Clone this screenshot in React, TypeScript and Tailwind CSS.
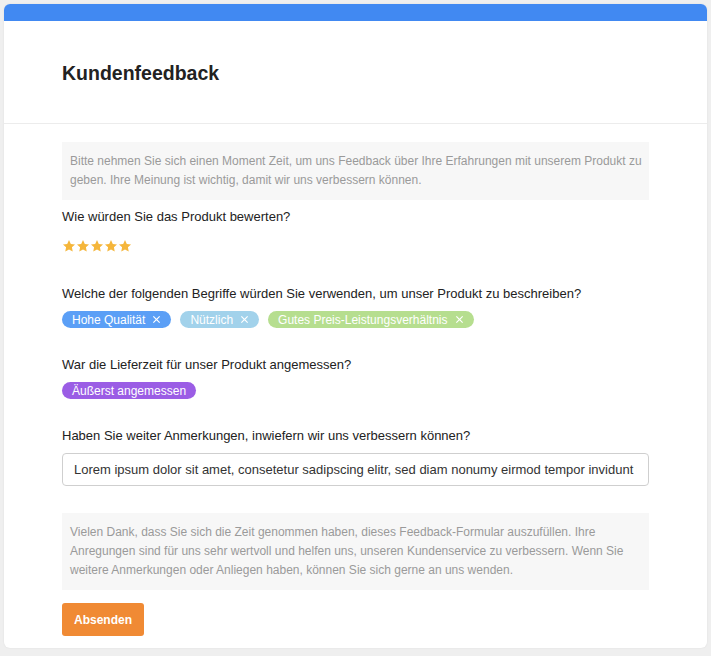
const tags = [
  { label: "Hohe Qualität", bg: "bg-[#5b9ff6]" },
  { label: "Nützlich", bg: "bg-[#a2d2eb]" },
  { label: "Gutes Preis-Leistungsverhältnis", bg: "bg-[#b6de8f]" },
];

function Star() {
  return (
    <svg width="14" height="14" viewBox="0 0 24 24" className="fill-[#f5b63b]">
      <path d="M12 1.8l3.1 6.6 7.2.9-5.3 5 1.4 7.1L12 17.9l-6.4 3.5 1.4-7.1-5.3-5 7.2-.9z" />
    </svg>
  );
}

function Label({ children }: { children: React.ReactNode }) {
  return <p className="text-[13px] leading-[20px] font-medium text-[#222]">{children}</p>;
}

export default function App() {
  return (
    <div className="min-h-screen bg-[#efefef] p-[4px] font-['Liberation_Sans',Arial,sans-serif]">
      <div className="overflow-hidden rounded-[6px] bg-white shadow-[0_0_2px_rgba(0,0,0,0.08)]">
        <div className="h-[17px] bg-[#4189f2]" />
        <header className="border-b border-[#ececec] px-[58px] pt-[37px] pb-[35px]">
          <h1 className="text-[19.5px] leading-[30px] font-bold text-[#222]">Kundenfeedback</h1>
        </header>

        <main className="px-[58px] pt-[18px] pb-[12px]">
          <div className="bg-[#f7f7f7] py-[10px] pr-[4px] pl-2 text-[12px] leading-[19px] text-[#9a9a9a]">
            Bitte nehmen Sie sich einen Moment Zeit, um uns Feedback über Ihre Erfahrungen mit
            unserem Produkt zu geben. Ihre Meinung ist wichtig, damit wir uns verbessern können.
          </div>

          <section className="mt-[7px]">
            <Label>Wie würden Sie das Produkt bewerten?</Label>
            <div className="mt-[7px] flex h-[24px] items-center">
              {[0, 1, 2, 3, 4].map((i) => (
                <Star key={i} />
              ))}
            </div>
          </section>

          <section className="mt-[26px]">
            <Label>Welche der folgenden Begriffe würden Sie verwenden, um unser Produkt zu beschreiben?</Label>
            <div className="mt-[7px] flex gap-[9px]">
              {tags.map((tag) => (
                <span
                  key={tag.label}
                  className={`${tag.bg} flex h-[17px] items-center gap-[7px] rounded-full px-[10px] text-[12px] text-white`}
                >
                  {tag.label}
                  <svg width="9" height="9" viewBox="0 0 10 10" className="stroke-white" strokeWidth="1.3">
                    <path d="M1.5 1.5l7 7M8.5 1.5l-7 7" />
                  </svg>
                </span>
              ))}
            </div>
          </section>

          <section className="mt-[27px]">
            <Label>War die Lieferzeit für unser Produkt angemessen?</Label>
            <div className="mt-[7px] flex">
              <span className="flex h-[17px] items-center rounded-full bg-[#9b5de5] px-[10px] text-[12px] text-white">
                Äußerst angemessen
              </span>
            </div>
          </section>

          <section className="mt-[27px]">
            <Label>Haben Sie weiter Anmerkungen, inwiefern wir uns verbessern können?</Label>
            <input
              readOnly
              value="Lorem ipsum dolor sit amet, consetetur sadipscing elitr, sed diam nonumy eirmod tempor invidunt ut labore et dolore magna aliquyam erat"
              className="mt-[7px] h-[33px] w-full rounded-[4px] border border-[#cfcfcf] px-[11px] text-[13px] text-[#333] outline-none"
            />
          </section>

          <div className="mt-[27px] bg-[#f7f7f7] px-2 py-[10px] text-[12px] leading-[19px] text-[#9a9a9a]">
            Vielen Dank, dass Sie sich die Zeit genommen haben, dieses Feedback-Formular auszufüllen.
            Ihre Anregungen sind für uns sehr wertvoll und helfen uns, unseren Kundenservice zu
            verbessern. Wenn Sie weitere Anmerkungen oder Anliegen haben, können Sie sich gerne an uns
            wenden.
          </div>

          <button className="mt-[13px] h-[33px] rounded-[3px] bg-[#f08a34] px-3 text-[12px] font-bold text-white">
            Absenden
          </button>
        </main>
      </div>
    </div>
  );
}
